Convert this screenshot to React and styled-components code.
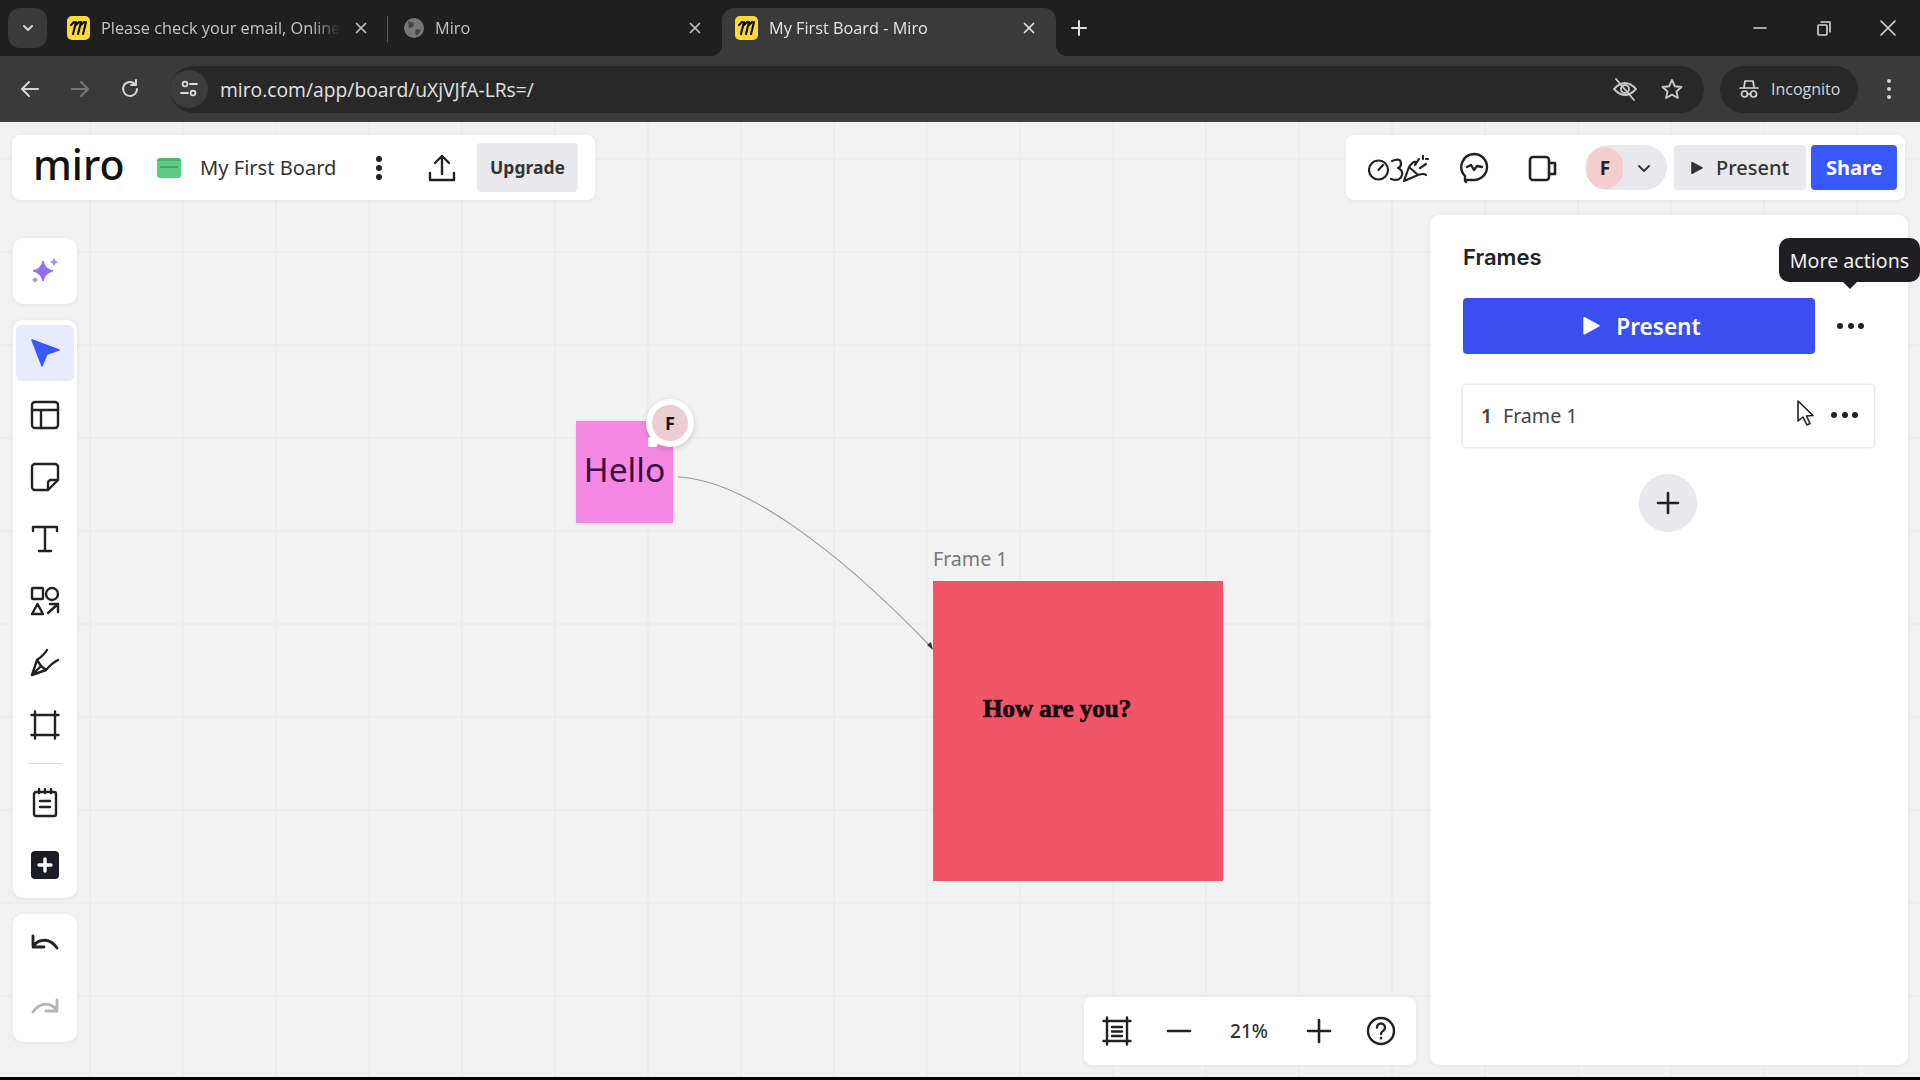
import React from 'react';
import styled, { createGlobalStyle } from 'styled-components';

const Global = createGlobalStyle`
  html, body { margin: 0; padding: 0; width: 1920px; height: 1080px; overflow: hidden; background: #000; }
  body { font-family: "Noto Sans", "Open Sans", sans-serif; }
  * { box-sizing: border-box; }
  svg { display: block; }
`;

const Page = styled.div`
  width: 1920px; height: 1080px; display: flex; flex-direction: column; background: #000;
`;

/* ---------- browser chrome ---------- */
const TabStrip = styled.div`
  height: 56px; flex: none; display: flex; align-items: flex-end; background: #1f1f1f; padding-left: 8px;
`;
const TabListButton = styled.div`
  width: 39px; height: 40px; margin-bottom: 8px; margin-right: 7px; border-radius: 12px; background: #3a3a3a;
  display: flex; align-items: center; justify-content: center; color: #d8d8d8;
`;
const Tab = styled.div`
  position: relative; width: 334px; height: 48px; flex: none; display: flex; align-items: center; gap: 11px;
  padding: 0 18px 8px 13px; border-radius: 12px 12px 0 0;
  background: ${p => (p.$active ? '#3a3a3a' : 'transparent')};
  color: ${p => (p.$active ? '#e6e6e6' : '#c4c4c4')};
  font: 400 16.3px "Open Sans", sans-serif;
  ${p => p.$active && `
    &::before, &::after { content: ""; position: absolute; bottom: 0; width: 12px; height: 12px; }
    &::before { left: -12px; background: radial-gradient(circle at 0 0, #1f1f1f 12px, #3a3a3a 12.5px); }
    &::after { right: -12px; background: radial-gradient(circle at 100% 0, #1f1f1f 12px, #3a3a3a 12.5px); }`}
  ${p => p.$divided && `&::after { content: ""; position: absolute; right: 0; top: 8px; width: 1px; height: 26px; background: #555; }`}
`;
const TabTitle = styled.span`
  flex: 1; min-width: 0; white-space: nowrap; overflow: hidden;
  -webkit-mask-image: linear-gradient(90deg, #000 88%, transparent 100%);
  mask-image: linear-gradient(90deg, #000 88%, transparent 100%);
`;
const GlobeSlot = styled.div`
  margin-left: 3px; flex: none;
`;
const NewTab = styled.div`
  margin-left: 12px; margin-bottom: 17px; width: 22px; height: 22px; color: #dcdcdc;
`;
const WindowControls = styled.div`
  margin-left: auto; align-self: flex-start; display: flex; height: 56px;
`;
const WindowButton = styled.div`
  width: 64px; display: flex; align-items: center; justify-content: center; color: #d8d8d8;
`;
const Toolbar = styled.div`
  height: 66px; flex: none; display: flex; align-items: center; padding-left: 5px; background: #3a3a3a;
`;
const NavButton = styled.div`
  width: 50px; display: flex; justify-content: center; color: ${p => (p.$dim ? '#777' : '#d4d4d4')};
`;
const Omnibox = styled.div`
  flex: 1; height: 47px; margin-left: 15px; display: flex; align-items: center; border-radius: 24px; background: #282828;
  padding-right: 20px; color: #d8d8d8;
`;
const SiteButton = styled.div`
  width: 38px; height: 38px; border-radius: 50%; background: #3c3c3c; display: flex; align-items: center; justify-content: center; color: #ddd;
`;
const Url = styled.span`
  flex: 1; margin-left: 12px; font: 400 19.3px "Open Sans", sans-serif; color: #e2e2e2;
`;
const OmniActions = styled.div`
  display: flex; gap: 22px; align-items: center; color: #c8c8c8;
`;
const IncognitoChip = styled.div`
  width: 138px; height: 47px; margin-left: 16px; display: flex; align-items: center; gap: 11px; padding-left: 18px;
  border-radius: 24px; background: #282828; color: #d4d4d4; font: 400 16px "Open Sans", sans-serif;
`;
const MenuButton = styled.div`
  width: 62px; display: flex; justify-content: center; color: #d4d4d4;
`;

/* ---------- board ---------- */
const Board = styled.main`
  position: relative; flex: 1; min-height: 0; display: flex; flex-direction: column; padding: 13px 12px 12px;
  background-color: #f2f2f2;
  background-image: linear-gradient(90deg, #ededed 2px, transparent 2px), linear-gradient(#ededed 2px, transparent 2px);
  background-size: 93px 93px;
  background-position: 89px 36px;
`;
const TopRow = styled.div`
  position: relative; z-index: 1; display: flex; justify-content: space-between; height: 65px; flex: none; margin-right: 3px;
`;
const Bar = styled.div`
  display: flex; align-items: center; background: #fff; border-radius: 8px; box-shadow: 0 1px 5px rgba(0,0,0,.06);
`;
const BoardBar = styled(Bar)`
  width: 583px; padding: 0 17px 0 21px;
`;
const Logo = styled.span`
  width: 92px; font: 500 41px/1 "Noto Sans", sans-serif; color: #111; margin-top: -6px;
`;
const BoardIcon = styled.div`
  width: 24px; height: 20px; margin-left: 32px; border-radius: 3px; background: #5ccb83; border-top: 3px solid #49b56f; position: relative;
  &::after { content: ""; position: absolute; left: 3px; right: 3px; top: 5px; height: 2px; background: #3fa663; }
`;
const BoardTitle = styled.span`
  margin-left: 19px; font: 400 20.1px "Noto Sans", sans-serif; color: #333; white-space: nowrap;
`;
const BoardIconBtn = styled.div`
  display: flex; justify-content: center; color: #222; width: ${p => p.$w}px; margin-left: ${p => p.$ml}px;
`;
const Upgrade = styled.div`
  margin-left: auto; width: 101px; height: 49px; display: flex; align-items: center; justify-content: center; padding-bottom: 2px;
  border-radius: 4px; background: #e9e9ed; font: 700 17.5px "Noto Sans", sans-serif; color: #333;
`;
const CollabBar = styled(Bar)`
  width: 559px; padding: 0 8px 0 22px;
`;
const CollabIcon = styled.div`
  display: flex; justify-content: center; color: #222; margin-left: ${p => p.$ml || 0}px;
`;
const AvatarChip = styled.div`
  width: 82px; height: 45px; margin-left: 27px; display: flex; align-items: center; border-radius: 23px; background: #e9e9ed; color: #333; padding-left: 2px;
`;
const AvatarCircle = styled.div`
  width: 36px; height: 42px; border-radius: 18px; background: #f3cdd0; display: flex; align-items: center; justify-content: center;
  font: 700 19px "Noto Sans", sans-serif; color: #222; margin-right: 12px;
`;
const PresentSmall = styled.div`
  width: 133px; height: 45px; margin-left: 7px; display: flex; align-items: center; justify-content: center; gap: 13px;
  border-radius: 4px; background: #e9e9ed; font: 500 20px "Noto Sans", sans-serif; color: #333;
`;
const ShareButton = styled.div`
  width: 86px; height: 45px; margin-left: 5px; display: flex; align-items: center; justify-content: center;
  border-radius: 4px; background: #3859ff; font: 700 20px "Noto Sans", sans-serif; color: #fff;
`;

const MainRow = styled.div`
  position: relative; z-index: 1; flex: 1; min-height: 0; margin-top: 15px; display: flex;
`;
const LeftRail = styled.div`
  width: 64px; margin: 23px 0 0 1px; display: flex; flex-direction: column; gap: 16px;
`;
const RailCard = styled.div`
  width: 64px; background: #fff; border-radius: 10px; box-shadow: 0 1px 5px rgba(0,0,0,.07);
  padding: ${p => p.$pad || '0'}; display: flex; flex-direction: column; align-items: center; flex: none;
`;
const RailButton = styled.div`
  width: 58px; height: ${p => p.$h || 62}px; flex: none; border-radius: 6px; display: flex; align-items: center; justify-content: center;
  margin-bottom: ${p => (p.$active ? 3 : 0)}px;
  background: ${p => (p.$active ? '#e8ebfb' : 'transparent')}; color: ${p => p.$color || '#222'};
`;
const RailDivider = styled.div`
  width: 34px; height: 1px; background: #dcdcdc; margin: 7px 0 8px;
`;
const Center = styled.div`
  flex: 1; display: flex; flex-direction: column; justify-content: flex-end; align-items: flex-end; padding-right: 14px;
`;
const ZoomBar = styled(Bar)`
  width: 332px; height: 68px; padding: 0 20px 0 18px; gap: 32px; color: #222;
`;
const ZoomValue = styled.span`
  font: 500 19px "Noto Sans", sans-serif; color: #333; width: 46px; text-align: center; white-space: nowrap;
`;

/* ---------- frames panel ---------- */
const Panel = styled.aside`
  position: relative; width: 478px; flex: none; background: #fff; border-radius: 10px; box-shadow: 0 1px 6px rgba(0,0,0,.06);
  padding: 25px 33px 0; display: flex; flex-direction: column;
`;
const PanelTitle = styled.h2`
  margin: 0; height: 34px; font: 600 22px/34px "Inter", "Noto Sans", sans-serif; color: #222;
`;
const Tooltip = styled.div`
  position: absolute; left: 349px; top: 23px; width: 141px; height: 44px; display: flex; align-items: center; justify-content: center;
  border-radius: 10px; background: #1f1f23; color: #f0f0f0; font: 400 19.6px "Noto Sans", sans-serif; white-space: nowrap;
  &::after { content: ""; position: absolute; left: 64px; bottom: -7px; border: 7px solid transparent; border-bottom: 0; border-top-color: #1f1f23; }
`;
const PresentRow = styled.div`
  margin-top: 24px; display: flex; align-items: center;
`;
const PresentBig = styled.div`
  width: 352px; height: 56px; display: flex; align-items: center; justify-content: center; gap: 16px; padding-left: 6px; border-radius: 4px; background: #3b4ff0;
  color: #fff; font: 600 22.6px "Noto Sans", sans-serif;
`;
const Dots = styled.div`
  display: flex; gap: 4.5px; margin-left: ${p => (p.$auto ? 'auto' : `${p.$ml || 0}px`)};
  span { width: 6px; height: 6px; border-radius: 50%; background: #222; }
`;
const FrameRow = styled.div`
  position: relative; margin-top: 31px; width: 411px; height: 62px; display: flex; align-items: center; padding: 0 16px 2px 18px;
  border-radius: 4px; background: #fff; box-shadow: 0 0 3px rgba(0,0,0,.25); font: 400 19.6px "Noto Sans", sans-serif; color: #444;
`;
const FrameNumber = styled.span`
  font-weight: 600; width: 22px;
`;
const PointerWrap = styled.div`
  position: absolute; left: 333px; top: 14px;
`;
const AddCircle = styled.div`
  width: 58px; height: 58px; margin: 27px 0 0 176px; border-radius: 50%; background: #e9e9ed; display: flex; align-items: center; justify-content: center; color: #222;
`;

/* ---------- free canvas items ---------- */
const Sticky = styled.div`
  position: absolute; left: 576px; top: 299px; width: 97px; height: 102px; display: flex; align-items: center; justify-content: center; padding-bottom: 7px;
  background: #f488e2; color: #3a0f42; font: 400 33.6px "Noto Sans", sans-serif; box-shadow: 0 2px 3px rgba(0,0,0,.08);
`;
const Bubble = styled.div`
  position: absolute; left: 646px; top: 277px; width: 48px; height: 48px; border-radius: 50%; background: #fff; box-shadow: 0 2px 6px rgba(0,0,0,.16);
  display: flex; align-items: center; justify-content: center;
  &::after { content: ""; position: absolute; left: 2px; bottom: 0; width: 10px; height: 10px; background: #fff; border-radius: 2px 0 4px 2px; }
`;
const BubbleInner = styled.div`
  width: 36px; height: 36px; border-radius: 50%; background: #eccdd1; display: flex; align-items: center; justify-content: center;
  font: 700 18px "Noto Sans", sans-serif; color: #111;
`;
const Connector = styled.svg`
  position: absolute; left: 0; top: 0; width: 1920px; height: 955px; pointer-events: none;
`;
const FrameLabel = styled.span`
  position: absolute; left: 933px; top: 423px; font: 400 19.6px "Noto Sans", sans-serif; color: #777;
`;
const CanvasFrame = styled.div`
  position: absolute; left: 933px; top: 459px; width: 290px; height: 300px; background: #f25468;
`;
const FrameText = styled.span`
  position: absolute; left: 50px; top: 114px; font: 900 25px "Liberation Serif", serif; color: #1a0a0c; -webkit-text-stroke: .7px #1a0a0c; white-space: nowrap;
`;

/* ---------- drawings ---------- */
const S = ({ s = 28, w = 2.4, vb = 28, children, fill = 'none' }) => (
  <svg width={s} height={s} viewBox={`0 0 ${vb} ${vb}`} fill={fill} stroke="currentColor" strokeWidth={w} strokeLinecap="round" strokeLinejoin="round">{children}</svg>
);
const MiroFav = () => (
  <svg width="23" height="24" viewBox="0 0 23 24">
    <rect width="23" height="24" rx="5" fill="#ffdc35" />
    <path d="M6 18 L9 6 M11 18 L14 6 M16 18 L19 6 M4 9 L7 6 M9 9 L12 6 M14 9 L17 6" stroke="#111" strokeWidth="2.2" fill="none" strokeLinecap="round" />
  </svg>
);
const Globe = () => (
  <svg width="20" height="20" viewBox="0 0 20 20">
    <circle cx="10" cy="10" r="10" fill="#777" />
    <path d="M4 3 L10 5 L9 9 L5 10 Z M12 11 L17 12 L13 18 L11 15 Z" fill="#444" />
  </svg>
);
const X = ({ s = 18 }) => <S s={s} vb={18} w={1.7}><path d="M4.5 4.5 13.5 13.5M13.5 4.5 4.5 13.5" /></S>;
const Play = ({ s = 14, c = 'currentColor' }) => (
  <svg width={s} height={s * 1.15} viewBox="0 0 14 16"><path d="M1 1.5 13 8 1 14.5Z" fill={c} stroke={c} strokeWidth="1.5" strokeLinejoin="round" /></svg>
);

const Sparkle = () => (
  <svg width="30" height="30" viewBox="0 0 30 30">
    <path d="M13 5 Q15 13 23 15 Q15 17 13 25 Q11 17 3 15 Q11 13 13 5Z" fill="#8f6ff0" stroke="#8f6ff0" strokeLinejoin="round" />
    <path d="M24 2 Q25 5 28 6 Q25 7 24 10 Q23 7 20 6 Q23 5 24 2Z M5 21 Q6 23 8 24 Q6 25 5 27 Q4 25 2 24 Q4 23 5 21Z" fill="#a68bf5" />
  </svg>
);
const Arrow = () => (
  <svg width="30" height="30" viewBox="0 0 30 30"><path d="M2 2 L29 12 L17 16 L12 28Z" fill="#3859ff" stroke="#3859ff" strokeWidth="1.5" strokeLinejoin="round" /></svg>
);
const Template = () => <S s={30} vb={30} w={2.4}><rect x="2" y="2" width="26" height="26" rx="3" /><path d="M2 10H28M11 10V28" /></S>;
const StickyIcon = () => <S s={30} vb={30} w={2.4}><path d="M5 2H25a3 3 0 0 1 3 3V18L18 28H5a3 3 0 0 1-3-3V5a3 3 0 0 1 3-3Z" /><path d="M28 18H21a3 3 0 0 0-3 3V28" /></S>;
const TextIcon = () => <S s={30} vb={30} w={2.4}><path d="M3 7V3H27V7M15 3V27M9 27H21" /></S>;
const Shapes = () => <S s={30} vb={30} w={2.4}><rect x="2" y="2" width="11" height="11" rx="1" /><circle cx="22" cy="8" r="6" /><path d="M7.5 18 13 28H2ZM18 27 28 18M20 18H28V26" /></S>;
const Pen = () => <S s={30} vb={30} w={2.4}><path d="M2 27 L7 12 Q14 7 17 2 M2 27 L16 22 Q22 15 28 12 M7 12 L11 18 L16 22 M2 27 L10 19" /></S>;
const FrameIcon = () => <S s={30} vb={30} w={2.4}><path d="M1.5 5H28.5M1.5 25H28.5M5 1.5V28.5M25 1.5V28.5" /></S>;
const Notes = () => <S s={30} vb={30} w={2.4}><path d="M6 4H24a2 2 0 0 1 2 2V26a2 2 0 0 1-2 2H6a2 2 0 0 1-2-2V6a2 2 0 0 1 2-2Z" /><path d="M9 1V5M15 1V5M21 1V5M10 13H20M10 19H20" /></S>;
const AddBlock = () => (
  <svg width="30" height="30" viewBox="0 0 30 30"><rect x="1" y="1" width="28" height="28" rx="4" fill="#1c1c24" /><path d="M15 9V21M9 15H21" stroke="#fff" strokeWidth="3.4" strokeLinecap="round" /></svg>
);
const Undo = () => <S s={30} vb={30} w={2.8}><path d="M3 6V17H14M3 16C10 8 20 8 27 18" /></S>;
const Redo = () => <S s={30} vb={30} w={2.8}><path d="M27 6V17H16M27 16C20 8 10 8 3 18" /></S>;
const FitIcon = () => <S s={30} vb={30} w={2.4}><path d="M1.5 5H28.5M1.5 25H28.5M5 1.5V28.5M25 1.5V28.5M10 11H20M10 15.5H20M10 20H20" /></S>;

const Party = () => (
  <svg width="62" height="30" viewBox="0 0 62 30" fill="none" stroke="currentColor" strokeWidth="2.2" strokeLinecap="round" strokeLinejoin="round">
    <circle cx="10.5" cy="17" r="9.5" />
    <path d="M10.5 17 15 12" />
    <path d="M24 8 Q33 4 33 11 Q33 14 30 15 Q35 17 34 22 Q32 29 23 26" />
    <path d="M36 28 L41 14 L50 22 Z M41 14 Q45 8 48 9 M50 22 Q56 20 58 22 M47 12 L51 6 M52 15 L58 11 M55 3V6 M60 6H58" />
  </svg>
);
const Chat = () => (
  <svg width="30" height="32" viewBox="0 0 30 32" fill="none" stroke="currentColor" strokeWidth="2.4" strokeLinecap="round" strokeLinejoin="round">
    <path d="M15 2a13 13 0 0 1 0 26H7v2l-1-1V24A13 13 0 0 1 15 2Z" />
    <path d="M8 15 L12 13 L15 18 L18 14 L23 15" />
  </svg>
);
const Video = () => (
  <svg width="30" height="30" viewBox="0 0 30 30" fill="none" stroke="currentColor" strokeWidth="2.6" strokeLinejoin="round">
    <rect x="2" y="4" width="19" height="23" rx="3" />
    <path d="M21 10H27V21H21" />
  </svg>
);
const Pointer = () => (
  <svg width="20" height="28" viewBox="0 0 20 28"><path d="M2 2 V22 L7 18 L11 26 L14 24.5 L10.5 17 L17 16.5Z" fill="#fff" stroke="#222" strokeWidth="1.6" strokeLinejoin="round" /></svg>
);
const BottomEdge = styled.div`
  height: 3px; flex: none; background: #000;
`;

export default function App() {
  return (
    <Page>
      <Global />
      <TabStrip>
        <TabListButton><S s={16} vb={16} w={2}><path d="M4 6 8 10 12 6" /></S></TabListButton>
        <Tab $divided><MiroFav /><TabTitle>Please check your email, Online</TabTitle><X /></Tab>
        <Tab><GlobeSlot><Globe /></GlobeSlot><TabTitle>Miro</TabTitle><X /></Tab>
        <Tab $active><MiroFav /><TabTitle>My First Board - Miro</TabTitle><X /></Tab>
        <NewTab><S s={22} vb={22} w={2}><path d="M11 4V18M4 11H18" /></S></NewTab>
        <WindowControls>
          <WindowButton><S s={18} vb={18} w={1.6}><path d="M3 9H15" /></S></WindowButton>
          <WindowButton><S s={18} vb={18} w={1.6}><rect x="3" y="6" width="9" height="10" rx="1" /><path d="M6 3H15V13" /></S></WindowButton>
          <WindowButton><S s={20} vb={20} w={1.6}><path d="M3 3 17 17M17 3 3 17" /></S></WindowButton>
        </WindowControls>
      </TabStrip>
      <Toolbar>
        <NavButton><S s={22} vb={22} w={2}><path d="M19 11H3M10 4 3 11 10 18" /></S></NavButton>
        <NavButton $dim><S s={22} vb={22} w={2}><path d="M3 11H19M12 4 19 11 12 18" /></S></NavButton>
        <NavButton><S s={22} vb={22} w={2}><path d="M18 11a7 7 0 1 1-2-5M17 2V7H12" /></S></NavButton>
        <Omnibox>
          <SiteButton><S s={20} vb={20} w={1.8}><circle cx="6" cy="5" r="2.4" /><path d="M11 5H18M2 14H9" /><circle cx="14" cy="14" r="2.4" /></S></SiteButton>
          <Url>miro.com/app/board/uXjVJfA-LRs=/</Url>
          <OmniActions>
            <S s={26} vb={26} w={1.9}><path d="M2 13Q13 1 24 13Q13 25 2 13ZM4 3 22 24" /><circle cx="13" cy="13" r="4" /></S>
            <S s={24} vb={24} w={1.9}><path d="M12 3 14.8 9.2 21.5 10 16.5 14.5 17.9 21 12 17.7 6.1 21 7.5 14.5 2.5 10 9.2 9.2Z" /></S>
          </OmniActions>
        </Omnibox>
        <IncognitoChip>
          <S s={22} vb={22} w={1.7}><path d="M6 9 7 3H15L16 9M2 10H20" /><circle cx="6.5" cy="16" r="3" /><circle cx="15.5" cy="16" r="3" /><path d="M9.5 16H12.5" /></S>
          Incognito
        </IncognitoChip>
        <MenuButton>
          <svg width="6" height="22" viewBox="0 0 6 22" fill="currentColor"><circle cx="3" cy="3" r="2" /><circle cx="3" cy="11" r="2" /><circle cx="3" cy="19" r="2" /></svg>
        </MenuButton>
      </Toolbar>

      <Board>
        <Connector viewBox="0 0 1920 955">
          <path d="M678 355 C745 358 840 430 932 526" fill="none" stroke="#999" strokeWidth="1.2" />
          <path d="M927 523 L933 528 L931 520Z" fill="#333" />
        </Connector>
        <Sticky>Hello</Sticky>
        <Bubble><BubbleInner>F</BubbleInner></Bubble>
        <FrameLabel>Frame 1</FrameLabel>
        <CanvasFrame><FrameText>How are you?</FrameText></CanvasFrame>

        <TopRow>
          <BoardBar>
            <Logo>miro</Logo>
            <BoardIcon />
            <BoardTitle>My First Board</BoardTitle>
            <BoardIconBtn $w={20} $ml={33}>
              <svg width="6" height="24" viewBox="0 0 6 24" fill="currentColor"><circle cx="3" cy="3" r="3" /><circle cx="3" cy="12" r="3" /><circle cx="3" cy="21" r="3" /></svg>
            </BoardIconBtn>
            <BoardIconBtn $w={32} $ml={37}>
              <S s={30} vb={30} w={2.4}><path d="M15 21V3M8 10 15 3 22 10M3 20V27H27V20" /></S>
            </BoardIconBtn>
            <Upgrade>Upgrade</Upgrade>
          </BoardBar>
          <CollabBar>
            <CollabIcon><Party /></CollabIcon>
            <CollabIcon $ml={29}><Chat /></CollabIcon>
            <CollabIcon $ml={39}><Video /></CollabIcon>
            <AvatarChip>
              <AvatarCircle>F</AvatarCircle>
              <S s={18} vb={18} w={1.9}><path d="M4 7 9 12 14 7" /></S>
            </AvatarChip>
            <PresentSmall><Play s={12} />Present</PresentSmall>
            <ShareButton>Share</ShareButton>
          </CollabBar>
        </TopRow>

        <MainRow>
          <LeftRail>
            <RailCard><RailButton $h={66}><Sparkle /></RailButton></RailCard>
            <RailCard $pad="5px 0 2px">
              <RailButton $active $h={56}><Arrow /></RailButton>
              <RailButton><Template /></RailButton>
              <RailButton><StickyIcon /></RailButton>
              <RailButton><TextIcon /></RailButton>
              <RailButton><Shapes /></RailButton>
              <RailButton><Pen /></RailButton>
              <RailButton><FrameIcon /></RailButton>
              <RailDivider />
              <RailButton><Notes /></RailButton>
              <RailButton><AddBlock /></RailButton>
            </RailCard>
            <RailCard>
              <RailButton><Undo /></RailButton>
              <RailButton $h={66} $color="#b5b5bd"><Redo /></RailButton>
            </RailCard>
          </LeftRail>
          <Center>
            <ZoomBar>
              <FitIcon />
              <S s={30} vb={30} w={2.6}><path d="M4 15H26" /></S>
              <ZoomValue>21%</ZoomValue>
              <S s={30} vb={30} w={2.6}><path d="M4 15H26M15 4V26" /></S>
              <S s={30} vb={30} w={2.4}><circle cx="15" cy="15" r="13" /><path d="M11 11.5a4 4 0 1 1 6 3.5Q15 16 15 18" /><path d="M15 22V22.2" /></S>
            </ZoomBar>
          </Center>
          <Panel>
            <PanelTitle>Frames</PanelTitle>
            <Tooltip>More actions</Tooltip>
            <PresentRow>
              <PresentBig><Play s={17} c="#fff" />Present</PresentBig>
              <Dots $ml={22}><span /><span /><span /></Dots>
            </PresentRow>
            <FrameRow>
              <FrameNumber>1</FrameNumber>
              Frame 1
              <PointerWrap><Pointer /></PointerWrap>
              <Dots $auto><span /><span /><span /></Dots>
            </FrameRow>
            <AddCircle><S s={28} vb={28} w={2.6}><path d="M14 4V24M4 14H24" /></S></AddCircle>
          </Panel>
        </MainRow>
      </Board>
      <BottomEdge />
    </Page>
  );
}
